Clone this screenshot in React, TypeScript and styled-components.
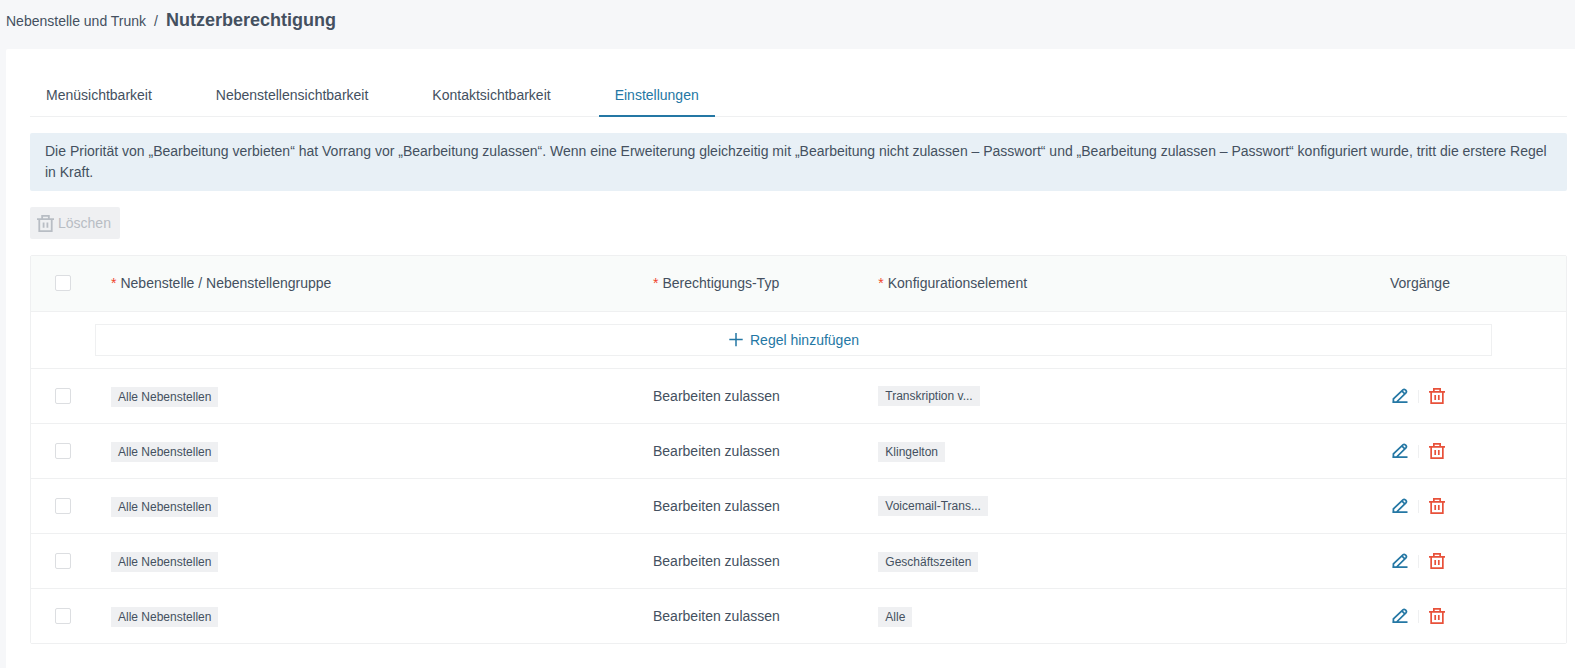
import React from 'react';
import styled, { createGlobalStyle } from 'styled-components';

const GlobalStyle = createGlobalStyle`
  * { box-sizing: border-box; }
  body {
    margin: 0;
    background: #f6f7f9;
    color: #445060;
    font: 14px/21px "Liberation Sans", Arial, sans-serif;
  }
  button { font: inherit; margin: 0; }
`;

const Page = styled.div`
  min-height: 668px;
  display: flex;
  flex-direction: column;
`;

const Breadcrumb = styled.header`
  height: 49px;
  padding: 6px 6px 0;
  display: flex;
  align-items: baseline;
  line-height: 28px;
  white-space: pre;
`;

const Separator = styled.span`
  margin: 0 8px;
`;

const Title = styled.h1`
  margin: 0;
  font-size: 18px;
  line-height: 28px;
  font-weight: 700;
`;

const Panel = styled.main`
  flex: 1;
  margin-left: 6px;
  padding: 24px 8px 24px 24px;
  background: #fff;
  border-top-left-radius: 2px;
`;

const Tabs = styled.nav`
  height: 44px;
  display: flex;
  gap: 32px;
  border-bottom: 1px solid #eff0f1;
`;

const Tab = styled.div<{ $active?: boolean }>`
  height: 44px;
  padding: 12px 16px 0;
  line-height: 21px;
  color: ${(p) => (p.$active ? '#2477a4' : 'inherit')};
  border-bottom: 2px solid ${(p) => (p.$active ? '#2477a4' : 'transparent')};
`;

const Notice = styled.div`
  margin-top: 16px;
  padding: 8px 15px;
  background: #e8f0f6;
  border-radius: 2px;
`;

const DeleteButton = styled.button`
  margin-top: 16px;
  width: 90px;
  height: 32px;
  padding: 0 0 0 7px;
  display: flex;
  align-items: center;
  gap: 4px;
  border: 0;
  border-radius: 2px;
  background: #eff0f2;
  color: #b8bdc4;
`;

const Table = styled.section`
  margin-top: 16px;
  border: 1px solid #eff0f1;
  border-radius: 2px;
`;

const Row = styled.div<{ $head?: boolean }>`
  display: grid;
  grid-template-columns: 64px 542px 225.3px 511.7px 1fr;
  align-items: center;
  height: ${(p) => (p.$head ? 56 : 55)}px;
  border-bottom: 1px solid #eff0f1;
  background: ${(p) => (p.$head ? '#f9fbfa' : '#fff')};
  &:last-child { height: 54px; border-bottom: 0; }
`;

const Cell = styled.div`
  padding: 0 16px;
  display: flex;
  align-items: center;
`;

const Actions = styled(Cell)`
  padding-left: 18px;
`;

const CheckCell = styled.div<{ $head?: boolean }>`
  padding: 0 0 ${(p) => (p.$head ? 1 : 0)}px 24px;
`;

const Checkbox = styled.span`
  display: block;
  width: 16px;
  height: 16px;
  border: 1px solid #dcdee1;
  border-radius: 2px;
  background: #fff;
`;

const Required = styled.span`
  color: #f0452c;
  margin-right: 4px;
`;

const AddRow = styled.div`
  height: 57px;
  padding: 12px 74px 0 64px;
  border-bottom: 1px solid #eff0f1;
`;

const AddButton = styled.button`
  width: 100%;
  height: 32px;
  padding: 0;
  display: flex;
  align-items: center;
  justify-content: center;
  gap: 7px;
  border: 1px solid #eff0f1;
  background: #fff;
  color: #2477a4;
`;

const Tag = styled.span<{ $low?: boolean }>`
  height: 20px;
  padding: 0 7px;
  margin-top: ${(p) => (p.$low ? 2 : 0)}px;
  background: #eff0f2;
  font-size: 12px;
  line-height: 20px;
  white-space: nowrap;
`;

const Divider = styled.span`
  width: 1px;
  height: 13px;
  margin: 0 10px;
  background: #eff0f1;
`;

const Icon = styled.svg`
  display: block;
  flex: none;
`;

const TrashIcon = ({ color, size = 16 }: { color: string; size?: number }) => (
  <Icon width={size} height={size} viewBox="0 0 16 16" fill="none" stroke={color} strokeWidth="1.7">
    <path d="M0 3.85H16M4.85 3.5V.85H11.15V3.5M2.15 4V15.15H13.85V4M6.2 7V12M9.8 7V12" />
  </Icon>
);

const EditIcon = () => (
  <Icon width="16" height="16" viewBox="0 0 16 16" fill="none" stroke="#2477a4" strokeWidth="1.75">
    <path d="M.4 14.2H15.5M1.4 14V10.9L10.9 1.8Q12.1.8 13.3 1.8L13.9 2.4Q15 3.6 13.9 4.8L4.6 14M9.8 2.9L12.8 5.8" />
  </Icon>
);

const PlusIcon = () => (
  <Icon width="15" height="15" viewBox="0 0 15 15" stroke="#2477a4" strokeWidth="1.5">
    <path d="M1.3 6.5H14.7M8 0V13.2" />
  </Icon>
);

const tabs = ['Menüsichtbarkeit', 'Nebenstellensichtbarkeit', 'Kontaktsichtbarkeit', 'Einstellungen'];
const items = ['Transkription v...', 'Klingelton', 'Voicemail-Trans...', 'Geschäftszeiten', 'Alle'];

export default function App() {
  return (
    <Page>
      <GlobalStyle />
      <Breadcrumb>
        <span>Nebenstelle und Trunk</span>
        <Separator>/</Separator>
        <Title>Nutzerberechtigung</Title>
      </Breadcrumb>
      <Panel>
        <Tabs>
          {tabs.map((t) => (
            <Tab key={t} $active={t === 'Einstellungen'}>{t}</Tab>
          ))}
        </Tabs>
        <Notice>
          Die Priorität von „Bearbeitung verbieten“ hat Vorrang vor „Bearbeitung zulassen“. Wenn eine Erweiterung
          gleichzeitig mit „Bearbeitung nicht zulassen – Passwort“ und „Bearbeitung zulassen – Passwort“ konfiguriert
          wurde, tritt die erstere Regel in Kraft.
        </Notice>
        <DeleteButton disabled>
          <TrashIcon color="#b8bdc4" size={17} />
          Löschen
        </DeleteButton>
        <Table>
          <Row $head>
            <CheckCell $head><Checkbox /></CheckCell>
            <Cell><Required>*</Required>Nebenstelle / Nebenstellengruppe</Cell>
            <Cell><Required>*</Required>Berechtigungs-Typ</Cell>
            <Cell><Required>*</Required>Konfigurationselement</Cell>
            <Cell>Vorgänge</Cell>
          </Row>
          <AddRow>
            <AddButton><PlusIcon />Regel hinzufügen</AddButton>
          </AddRow>
          {items.map((item) => (
            <Row key={item}>
              <CheckCell><Checkbox /></CheckCell>
              <Cell><Tag $low>Alle Nebenstellen</Tag></Cell>
              <Cell>Bearbeiten zulassen</Cell>
              <Cell><Tag $low={!item.endsWith('...')}>{item}</Tag></Cell>
              <Actions>
                <EditIcon />
                <Divider />
                <TrashIcon color="#e8513a" />
              </Actions>
            </Row>
          ))}
        </Table>
      </Panel>
    </Page>
  );
}
